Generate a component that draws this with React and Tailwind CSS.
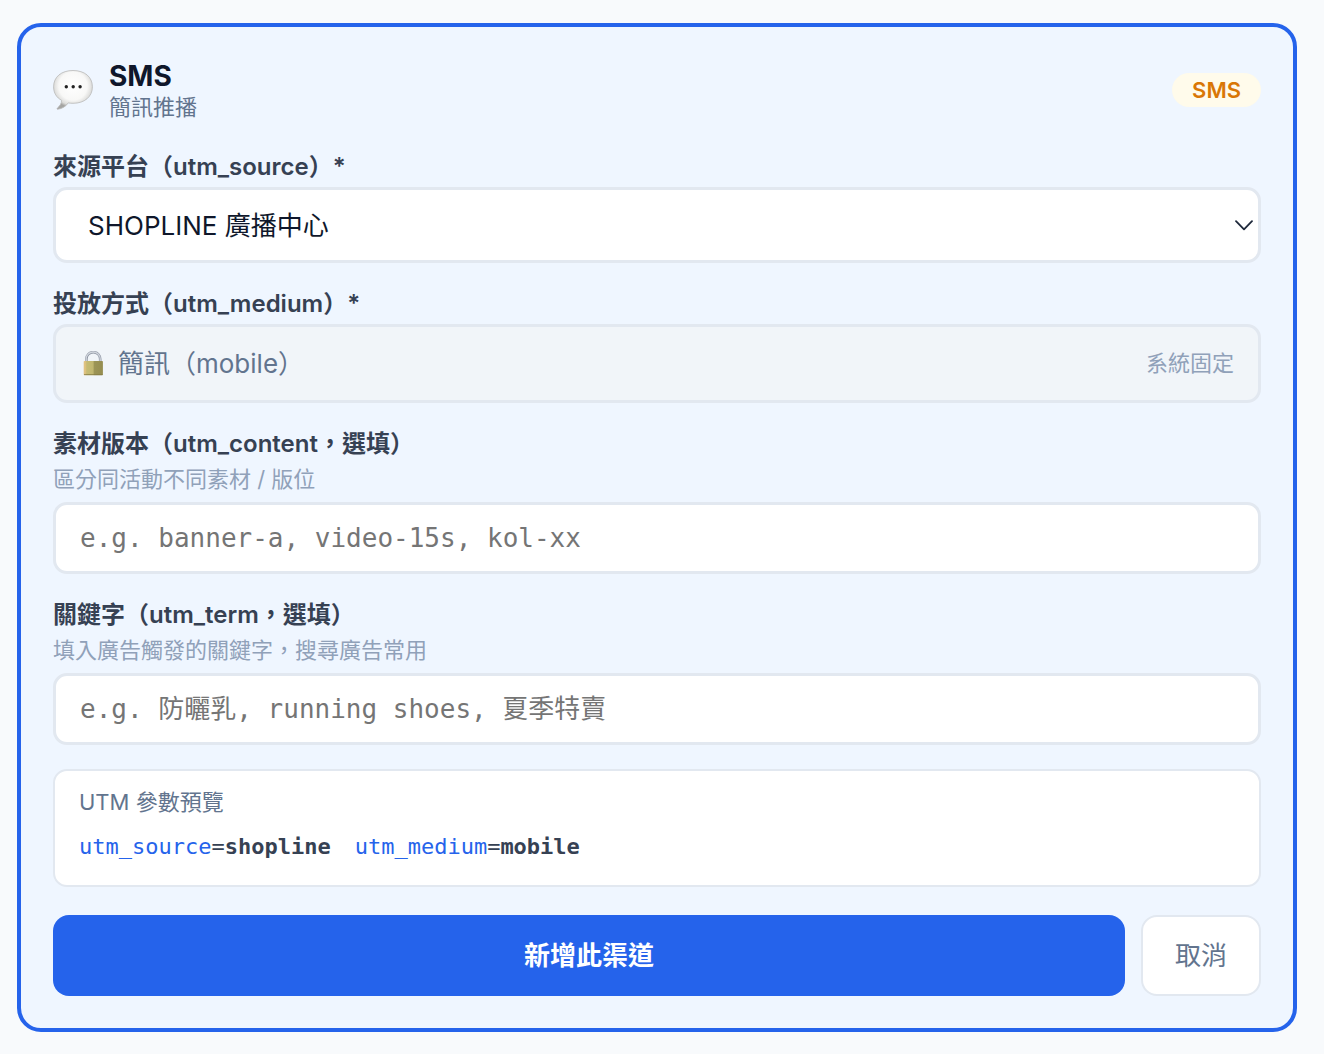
import React, { useState } from "react";

const SOURCES = [
	{ value: "shopline", label: "SHOPLINE 廣播中心" },
	{ value: "mitake", label: "三竹簡訊" },
];

// Speech bubble in the card header
const BubbleIcon = () => (
	<svg width="40" height="40" viewBox="0 0 40 40" className="shrink-0" aria-hidden="true">
		<defs>
			<radialGradient id="bubble" cx="50%" cy="40%" r="56%">
				<stop offset="0" stopColor="#ffffff" />
				<stop offset="0.65" stopColor="#f8f8f7" />
				<stop offset="0.88" stopColor="#dcdcda" />
				<stop offset="1" stopColor="#a5a5a3" />
			</radialGradient>
		</defs>
		<path
			d="M20 0.5C8.500 0.500 0.600 6.800 0.600 16.800c0 6.200 3 10.900 8 13.500 0 3-1.600 5.600-4.300 7.900-.6.5-.3 1.100.5 1 4.300-.5 8-2.700 10.400-6.300 1.500.3 3.100.4 4.800.4 11.500 0 19.400-6.500 19.400-16.500S31.500.5 20 .5z"
			fill="url(#bubble)"
			stroke="#b9b9b7"
			strokeWidth="0.8"
		/>
		<circle cx="13.300" cy="16.800" r="1.700" fill="#222" />
		<circle cx="20.200" cy="16.800" r="1.700" fill="#222" />
		<circle cx="27.100" cy="16.800" r="1.700" fill="#222" />
	</svg>
);

const LockIcon = () => (
	<svg width="26" height="26" viewBox="0 0 26 26" className="shrink-0" aria-hidden="true">
		<defs>
			<linearGradient id="lock" x1="0" x2="1" y1="0" y2="0">
				<stop offset="0" stopColor="#e3c486" />
				<stop offset="0.1" stopColor="#dcc07c" />
				<stop offset="0.16" stopColor="#c6bb74" />
				<stop offset="0.48" stopColor="#c0b66f" />
				<stop offset="0.56" stopColor="#9c9455" />
				<stop offset="1" stopColor="#958d50" />
			</linearGradient>
		</defs>
		<path d="M6.400 12V8a6.900 6.900 0 0 1 13.800 0V12" fill="none" stroke="#8f96a3" strokeWidth="2.600" />
		<path d="M6.200 12V8a7 7 0 0 1 14 0V12" fill="none" stroke="#d0d5dd" strokeWidth="1.300" />
		<rect x="3.700" y="10" width="19.200" height="14.200" rx="0.8" fill="url(#lock)" />
		<path d="M4 23.600h18.600" stroke="#857c45" strokeWidth="0.8" />
	</svg>
);

const Label = ({ htmlFor, children }) => (
	<label htmlFor={htmlFor} className="block mb-1 text-[24px] leading-[33px] font-semibold text-gray-700">
		{children}
	</label>
);

const TextField = ({ id, label, hint, placeholder, value, onChange }) => (
	<div>
		<Label htmlFor={id}>{label}</Label>
		<p id={`${id}-hint`} className="mb-2 text-[22px] leading-[30px] text-slate-400">
			{hint}
		</p>
		<input
			id={id}
			type="text"
			aria-describedby={`${id}-hint`}
			value={value}
			onChange={(e) => onChange(e.target.value)}
			placeholder={placeholder}
			className="
				block w-full h-[72px] px-6
				bg-white border-3 border-slate-200 rounded-[14px]
				font-['DejaVu_Sans_Mono','Noto_Sans_CJK_TC',monospace] text-[26px]
				text-slate-900 placeholder:text-[#757575]
			"
		/>
	</div>
);

const Param = ({ name, value }) => (
	<span>
		<span className="text-[#2563eb]">{name}</span>=
		<strong className="font-bold">{value}</strong>
	</span>
);

function App() {
	const [source, setSource] = useState("shopline");
	const [content, setContent] = useState("");
	const [term, setTerm] = useState("");

	return (
		<div
			lang="zh-Hant"
			className="
				min-h-screen bg-slate-50 pt-[23px] pb-[22px] pl-[17px] pr-[27px]
				font-['Inter','Noto_Sans_CJK_TC',sans-serif]
			"
		>
			<form
				onSubmit={(e) => e.preventDefault()}
				className="p-8 bg-[#eff6ff] border-4 border-[#2563eb] rounded-3xl"
			>
				{/* Header */}
				<div className="flex items-center justify-between mb-[29px]">
					<div className="flex items-center gap-4">
						<BubbleIcon />
						<div>
							<h2 className="text-[28px] leading-[34px] font-bold text-slate-900">SMS</h2>
							<p className="text-[22px] leading-[28px] text-slate-500">簡訊推播</p>
						</div>
					</div>
					<span className="px-5 rounded-full bg-amber-50 text-[22px] leading-[34px] font-semibold text-[#d97706]">
						SMS
					</span>
				</div>

				<div className="flex flex-col gap-6">
					{/* Source */}
					<div>
						<Label htmlFor="utm-source">來源平台（utm_source）*</Label>
						<div className="relative">
							<select
								id="utm-source"
								value={source}
								onChange={(e) => setSource(e.target.value)}
								className="
									block w-full h-[76px] px-8 appearance-none
									bg-white border-3 border-slate-200 rounded-[14px]
									text-[26px] text-slate-900
								"
							>
								{SOURCES.map((s) => (
									<option key={s.value} value={s.value}>
										{s.label}
									</option>
								))}
							</select>
							<svg
								width="18"
								height="12"
								viewBox="0 0 18 12"
								className="absolute right-2 inset-y-0 my-auto pointer-events-none"
								aria-hidden="true"
							>
								<path
									d="M1 2.200 9 10.400l8-8.200"
									fill="none"
									stroke="#1e293b"
									strokeWidth="1.800"
									strokeLinecap="round"
									strokeLinejoin="round"
								/>
							</svg>
						</div>
					</div>

					{/* Medium is fixed by the channel */}
					<div>
						<Label htmlFor="utm-medium">投放方式（utm_medium）*</Label>
						<div className="flex items-center gap-3 h-[79px] px-6 bg-slate-100 border-3 border-slate-200 rounded-[14px]">
							<LockIcon />
							<output id="utm-medium" className="grow text-[26px] text-slate-500">
								簡訊（mobile）
							</output>
							<span className="text-[22px] text-slate-400">系統固定</span>
						</div>
					</div>

					<TextField
						id="utm-content"
						label="素材版本（utm_content，選填）"
						hint="區分同活動不同素材 / 版位"
						placeholder="e.g. banner-a, video-15s, kol-xx"
						value={content}
						onChange={setContent}
					/>

					<TextField
						id="utm-term"
						label="關鍵字（utm_term，選填）"
						hint="填入廣告觸發的關鍵字，搜尋廣告常用"
						placeholder="e.g. 防曬乳, running shoes, 夏季特賣"
						value={term}
						onChange={setTerm}
					/>

					{/* Preview */}
					<div className="px-6 pt-4 pb-[22px] bg-white border-2 border-slate-200 rounded-[14px]">
						<p className="mb-[14px] text-[22px] leading-[30px] text-slate-500">UTM 參數預覽</p>
						<div
							className="
								flex flex-wrap gap-x-6
								font-['DejaVu_Sans_Mono','Noto_Sans_CJK_TC',monospace] text-[22px] leading-8
								text-gray-700
							"
						>
							<Param name="utm_source" value={source} />
							<Param name="utm_medium" value="mobile" />
							{content && <Param name="utm_content" value={content} />}
							{term && <Param name="utm_term" value={term} />}
						</div>
					</div>
				</div>

				{/* Actions */}
				<div className="flex gap-4 mt-7">
					<button type="submit" className="grow h-[81px] rounded-2xl bg-[#2563eb] text-[26px] font-bold text-white">
						新增此渠道
					</button>
					<button
						type="button"
						className="h-[81px] px-8 rounded-2xl bg-white border-2 border-slate-200 text-[26px] text-slate-500"
					>
						取消
					</button>
				</div>
			</form>
		</div>
	);
}

export default App;
